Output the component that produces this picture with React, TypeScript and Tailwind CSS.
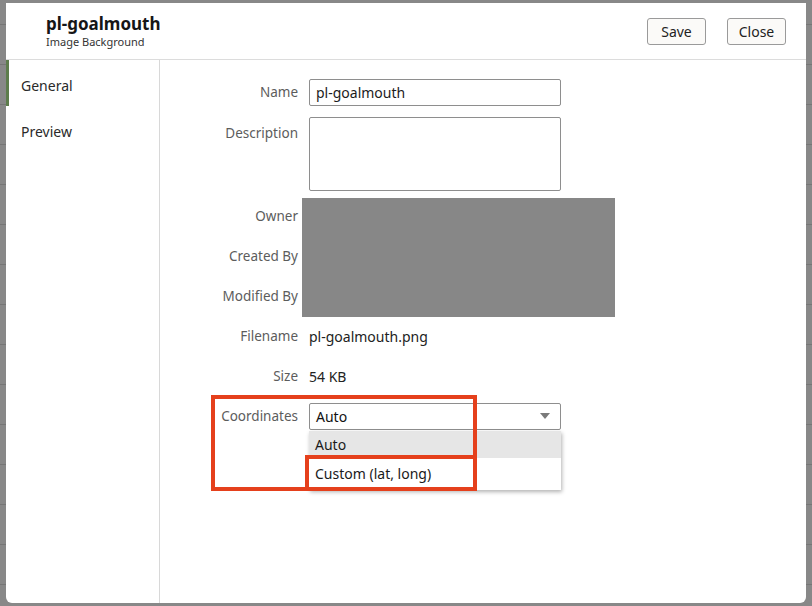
const font = { fontFamily: '"Noto Sans", "Open Sans", Arial, sans-serif' };

function FieldRow({ label, children }: { label: string; children?: React.ReactNode }) {
  return (
    <div className="flex h-[40px] items-center">
      <div className="w-[138px] text-right text-[13.5px] text-[#5c5c5c]">{label}</div>
      <div className="ml-[11px] flex-1 text-[14px] text-[#222]">{children}</div>
    </div>
  );
}

export default function App() {
  return (
    <div
      className="h-[606px] w-[812px] overflow-hidden bg-[#888888] bg-[repeating-linear-gradient(to_bottom,transparent_0px,transparent_24px,#767676_24px,#767676_25px,transparent_25px,transparent_40px)] pt-[3px] pl-[6px]"
      style={font}
    >
      <div className="flex h-[600px] w-[800px] flex-col rounded-b-[6px] bg-white">
        {/* header */}
        <div className="flex h-[57px] shrink-0 items-start justify-between border-b border-[#dcdcdc] pl-[40px] pr-[20px]">
          <div className="flex flex-col gap-[3px] pt-[12px]">
            <div className="text-[17px] font-bold leading-[18px] text-[#161616]">pl-goalmouth</div>
            <div className="text-[11px] leading-[12px] text-[#333]">Image Background</div>
          </div>
          <div className="flex gap-[21px] pt-[15px]">
            <button className="h-[27px] w-[59px] rounded-[3px] border border-[#9a9a9a] bg-[#fbfaf8] text-[14px] text-[#222]">
              Save
            </button>
            <button className="h-[27px] w-[59px] rounded-[3px] border border-[#9a9a9a] bg-[#fbfaf8] text-[14px] text-[#222]">
              Close
            </button>
          </div>
        </div>

        <div className="flex flex-1">
          {/* left nav */}
          <div className="w-[154px] shrink-0 border-r border-[#d8d8d8]">
            <div className="flex h-[46px] items-center border-l-[3px] border-[#5d7d4c] pl-[12px] pt-[4px] text-[14px] text-[#2a2a2a]">
              General
            </div>
            <div className="flex h-[46px] items-center pl-[15px] pt-[4px] text-[14px] text-[#2a2a2a]">Preview</div>
          </div>

          {/* form */}
          <div className="relative flex-1 pt-[19px]">
            <div className="flex h-[27px] items-center">
              <div className="w-[138px] text-right text-[13.5px] text-[#5c5c5c]">Name</div>
              <div className="ml-[11px] flex h-[27px] w-[252px] items-center rounded-[2px] border border-[#8e8e8e] px-[6px] text-[14px] text-[#1c1c1c]">
                pl-goalmouth
              </div>
            </div>
            <div className="mt-[11px] flex">
              <div className="w-[138px] pt-[6px] text-right text-[13.5px] text-[#5c5c5c]">Description</div>
              <div className="ml-[11px] h-[74px] w-[252px] rounded-[2px] border border-[#8e8e8e]" />
            </div>

            <div className="relative mt-[5px]">
              <FieldRow label="Owner" />
              <FieldRow label="Created By" />
              <FieldRow label="Modified By" />
              <div className="absolute left-[142px] top-[2px] h-[119px] w-[313px] bg-[#878787]" />
            </div>
            <FieldRow label="Filename">pl-goalmouth.png</FieldRow>
            <FieldRow label="Size">54 KB</FieldRow>

            <div className="flex h-[40px] items-center">
              <div className="w-[138px] text-right text-[13.5px] text-[#5c5c5c]">Coordinates</div>
              <div className="relative ml-[11px]">
                <div className="flex h-[27px] w-[252px] items-center justify-between rounded-[2px] border border-[#8e8e8e] pl-[6px] pr-[10px] text-[14px] text-[#111]">
                  <span>Auto</span>
                  <svg width="10" height="6" viewBox="0 0 10 6">
                    <path d="M0 0 L10 0 L5 6 Z" fill="#7a7a7a" />
                  </svg>
                </div>
                <div className="absolute left-0 top-[28px] w-[252px] bg-white text-[14px] text-[#1a1a1a] shadow-[1px_2px_4px_rgba(0,0,0,0.3)]">
                  <div className="flex h-[27px] items-center bg-[#e6e6e6] pl-[6px]">Auto</div>
                  <div className="flex h-[32px] items-center pl-[6px]">Custom (lat, long)</div>
                </div>
              </div>
            </div>

            {/* annotation boxes */}
            <div className="pointer-events-none absolute left-[51px] top-[335px] h-[96px] w-[266px] border-4 border-[#e5401c]" />
            <div className="pointer-events-none absolute left-[145px] top-[395px] h-[36px] w-[172px] border-4 border-[#e5401c]" />
          </div>
        </div>
      </div>
    </div>
  );
}
